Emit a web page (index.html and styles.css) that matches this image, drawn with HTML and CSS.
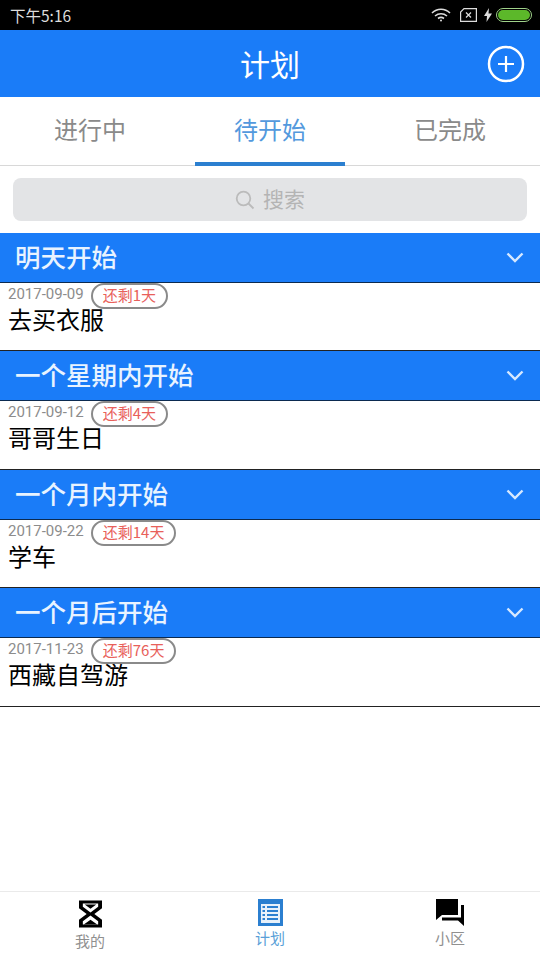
FILE: index.html
```html
<!DOCTYPE html>
<html lang="zh-CN">

<head>
    <meta charset="UTF-8">
    <meta name="viewport" content="width=device-width, initial-scale=1.0">
    <title>计划</title>
    <link rel="stylesheet" href="styles.css">
</head>

<body>
    <div class="status-bar">
        <span class="status-time">下午5:16</span>
        <div class="status-icons">
            <svg width="20" height="14" viewBox="0 0 20 14" fill="none" stroke="#ddd" stroke-width="1.6">
                <path d="M1 5 C6 0 14 0 19 5" />
                <path d="M4 8 C7.500 5 12.500 5 16 8" />
                <path d="M7 10.500 C8.800 9.200 11.200 9.200 13 10.500" />
                <circle cx="10" cy="12.500" r="1" fill="#ddd" stroke="none" />
            </svg>
            <svg width="17" height="14" viewBox="0 0 17 14" fill="none" stroke="#ddd" stroke-width="1.200">
                <path d="M4 .6 H16.400 V13.400 H.6 V4 Z" />
                <path d="M6 4.500 L11 9.500 M11 4.500 L6 9.500" />
            </svg>
            <svg width="8" height="14" viewBox="0 0 8 14">
                <path d="M5 0 L0 8 H3 L2.500 14 L8 5.500 H4.500 Z" fill="#ddd" />
            </svg>
            <div class="battery"><div class="battery-fill"></div></div>
        </div>
    </div>

    <header class="app-header">
        <h1>计划</h1>
        <svg class="add-icon" width="38" height="38" viewBox="0 0 38 38" fill="none" stroke="#fff">
            <circle cx="19" cy="19" r="17" stroke-width="2.500" />
            <path d="M19 11 V27 M11 19 H27" stroke-width="2.200" />
        </svg>
    </header>

    <nav class="tabs">
        <div class="tab">进行中</div>
        <div class="tab tab-active">待开始</div>
        <div class="tab">已完成</div>
    </nav>

    <div class="search-wrap">
        <div class="search-box">
            <svg width="20" height="20" viewBox="0 0 20 20" fill="none" stroke="#bbb" stroke-width="1.800">
                <circle cx="8.500" cy="8.500" r="6.800" />
                <path d="M13.500 13.500 L18.500 18.500" />
            </svg>
            <span>搜索</span>
        </div>
    </div>

    <main class="plan-list">
        <section class="group">
            <div class="group-head">
                <h2>明天开始</h2>
                <svg class="chevron" width="18" height="11" viewBox="0 0 18 11" fill="none" stroke="#d6e8ff" stroke-width="2.400"><path d="M1.500 1.500 L9 9 L16.500 1.500" /></svg>
            </div>
            <div class="item">
                <div class="item-meta"><span class="item-date">2017-09-09</span><span class="badge">还剩1天</span></div>
                <div class="item-title">去买衣服</div>
            </div>
        </section>
        <section class="group">
            <div class="group-head">
                <h2>一个星期内开始</h2>
                <svg class="chevron" width="18" height="11" viewBox="0 0 18 11" fill="none" stroke="#d6e8ff" stroke-width="2.400"><path d="M1.500 1.500 L9 9 L16.500 1.500" /></svg>
            </div>
            <div class="item">
                <div class="item-meta"><span class="item-date">2017-09-12</span><span class="badge">还剩4天</span></div>
                <div class="item-title">哥哥生日</div>
            </div>
        </section>
        <section class="group">
            <div class="group-head">
                <h2>一个月内开始</h2>
                <svg class="chevron" width="18" height="11" viewBox="0 0 18 11" fill="none" stroke="#d6e8ff" stroke-width="2.400"><path d="M1.500 1.500 L9 9 L16.500 1.500" /></svg>
            </div>
            <div class="item">
                <div class="item-meta"><span class="item-date">2017-09-22</span><span class="badge">还剩14天</span></div>
                <div class="item-title">学车</div>
            </div>
        </section>
        <section class="group">
            <div class="group-head">
                <h2>一个月后开始</h2>
                <svg class="chevron" width="18" height="11" viewBox="0 0 18 11" fill="none" stroke="#d6e8ff" stroke-width="2.400"><path d="M1.500 1.500 L9 9 L16.500 1.500" /></svg>
            </div>
            <div class="item">
                <div class="item-meta"><span class="item-date">2017-11-23</span><span class="badge">还剩76天</span></div>
                <div class="item-title">西藏自驾游</div>
            </div>
        </section>
    </main>

    <footer class="tabbar">
        <div class="tabbar-item tabbar-mine">
            <svg width="23" height="28" viewBox="0 0 24 28">
                <path fill-rule="evenodd" fill="#000" d="M0 0 H24 V8 L16 14 L24 20 V28 H0 V20 L8 14 L0 8 Z M4 3 V6.500 L12 12.500 L20 6.500 V3 Z M12 15.500 L4 21.500 V25 H20 V21.500 Z" />
                <path fill="#000" d="M6 4 H18 L12 8.500 Z M12 20 L19 25 H5 Z" />
            </svg>
            <span>我的</span>
        </div>
        <div class="tabbar-item tabbar-active">
            <svg width="25" height="27" viewBox="0 0 25 27">
                <rect width="25" height="27" fill="#2b7fd0" />
                <rect x="3" y="5" width="19" height="19" fill="#e8f1fa" />
                <path d="M9 8 H20 M9 12 H20 M9 16 H20 M9 20 H20" stroke="#2b7fd0" stroke-width="2" />
                <path d="M4.500 8 H7 M4.500 12 H7 M4.500 16 H7 M4.500 20 H7" stroke="#2b7fd0" stroke-width="2" />
            </svg>
            <span>计划</span>
        </div>
        <div class="tabbar-item">
            <svg width="28" height="27" viewBox="0 0 28 27">
                <path fill="#000" d="M0 0 H22 V16 H6 L0 21 Z" />
                <path fill="#000" d="M25 6 H28 V27 L22 21.500 H6 V18.500 H25 Z" />
            </svg>
            <span>小区</span>
        </div>
    </footer>
</body>

</html>
```

FILE: styles.css
```css
* {
    box-sizing: border-box;
}

body {
    font-family: "Noto Sans CJK SC", "Roboto", sans-serif;
    background-color: #fff;
    margin: 0;
    padding: 0;
    width: 540px;
    height: 960px;
    overflow: hidden;
    display: flex;
    flex-direction: column;
}

/* Status bar */
.status-bar {
    height: 30px;
    background-color: #000;
    color: #ddd;
    display: flex;
    align-items: center;
    justify-content: space-between;
    padding: 0 8px 0 10px;
}

.status-time {
    font-size: 15.500px;
}

.status-icons {
    display: flex;
    align-items: center;
    gap: 9px;
}

.status-icons svg:nth-child(3) {
    margin-left: -2px;
    margin-right: -5px;
}

.battery {
    width: 36px;
    height: 14px;
    border: 1px solid #9fd28a;
    border-radius: 7px;
    padding: 1px;
}

.battery-fill {
    height: 100%;
    background-color: #5cb82a;
    border-radius: 5px;
}

/* Header */
.app-header {
    height: 67px;
    background-color: #1a7cf8;
    display: flex;
    align-items: center;
    justify-content: center;
    position: relative;
}

.app-header h1 {
    margin: 0 0 2px;
    font-size: 30px;
    font-weight: 400;
    color: #fff;
}

.add-icon {
    position: absolute;
    right: 15px;
    top: 15px;
}

/* Tabs */
.tabs {
    height: 69px;
    display: flex;
    border-bottom: 1px solid #d8d8d8;
}

.tab {
    flex: 1;
    display: flex;
    align-items: center;
    justify-content: center;
    font-size: 24px;
    color: #8a8a8a;
    padding-bottom: 6px;
    position: relative;
}

.tab-active {
    color: #5399dd;
}

.tab-active::after {
    content: "";
    position: absolute;
    left: 15px;
    right: 15px;
    bottom: -1px;
    height: 4px;
    background-color: #2b7fd0;
}

/* Search */
.search-wrap {
    padding: 12px 13px;
}

.search-box {
    height: 43px;
    background-color: #e3e4e6;
    border-radius: 8px;
    display: flex;
    align-items: center;
    justify-content: center;
    gap: 8px;
    color: #b4b4b4;
    font-size: 21px;
}

.search-box span {
    margin-top: -3px;
}

/* Plan groups */
.group-head {
    height: 50px;
    background-color: #1a7cf8;
    border-bottom: 1px solid #0b2a50;
    display: flex;
    align-items: center;
    justify-content: space-between;
    padding: 0 16px 0 15px;
}

.group-head h2 {
    margin: 0 0 4px;
    font-size: 25.500px;
    font-weight: 500;
    color: #e8f3ff;
}

.item {
    height: 68.400px;
    border-bottom: 1px solid #222;
    padding: 0 8px;
}

.item-meta {
    display: flex;
    align-items: flex-start;
    height: 24px;
}

.item-date {
    font-family: "Roboto", sans-serif;
    font-size: 15px;
    line-height: 20px;
    color: #8c8c8c;
    margin-top: 1px;
}

.badge {
    margin-left: 7px;
    height: 26px;
    padding: 0 10px;
    border: 2px solid #8a8a8a;
    border-radius: 13px;
    font-size: 15px;
    line-height: 20px;
    color: #e8605a;
    position: relative;
    z-index: 1;
}

.item-title {
    font-size: 24px;
    line-height: 24px;
    color: #000;
}

/* Bottom tab bar */
.tabbar {
    margin-top: auto;
    height: 69px;
    border-top: 1px solid #eaeaea;
    display: flex;
}

.tabbar-item {
    flex: 1;
    display: flex;
    flex-direction: column;
    align-items: center;
    padding-top: 7px;
    font-size: 15px;
    line-height: 20px;
    color: #909090;
    gap: 2px;
}

.tabbar-mine {
    padding-top: 8px;
    gap: 3px;
}

.tabbar-active {
    color: #5a9fd8;
}
```
